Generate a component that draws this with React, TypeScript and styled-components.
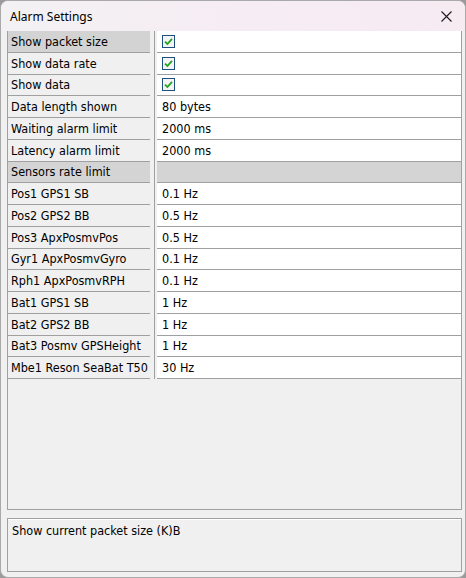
import styled, { createGlobalStyle } from 'styled-components'

const GlobalStyle = createGlobalStyle`
  html, body {
    margin: 0;
    padding: 0;
    background: #9a9a9a;
  }
  * {
    box-sizing: border-box;
  }
`

const lineColor = '#a0a0a0'
const gridFont = `"DejaVu Sans Condensed", "Liberation Sans", sans-serif`

const Window = styled.div`
  width: 466px;
  height: 578px;
  display: flex;
  flex-direction: column;
  background: #f0f0f0;
  border: 1px solid #a9a9a9;
  border-radius: 8px;
  overflow: hidden;
`

const TitleBar = styled.div`
  height: 30px;
  flex: none;
  display: flex;
  align-items: center;
  justify-content: space-between;
  padding: 0 9px 0 9px;
  background: linear-gradient(90deg, #f3f1f3 0%, #f6ecf3 60%, #f7ebf2 100%);
`

const Title = styled.span`
  font-family: "Segoe UI", "Noto Sans", sans-serif;
  font-size: 12px;
  color: #000;
`

const CloseButton = styled.button`
  width: 16px;
  height: 16px;
  padding: 0;
  border: none;
  background: transparent;
  display: flex;
  align-items: center;
  justify-content: center;
  margin-right: 2px;
`

const Body = styled.div`
  flex: 1;
  display: flex;
  flex-direction: column;
  padding: 0 3px 5px 6px;
`

const GridBox = styled.div`
  flex: 1;
  display: flex;
  flex-direction: column;
  border-left: 1px solid ${lineColor};
  border-right: 1px solid ${lineColor};
  border-bottom: 1px solid ${lineColor};
`

const Row = styled.div`
  display: grid;
  grid-template-columns: 142px 7px 1fr;
  height: 21.75px;
  font-family: ${gridFont};
  font-size: 12.5px;
  color: #000;
`

const LabelCell = styled.div<{ $shade: 'none' | 'selected' | 'category' }>`
  display: flex;
  align-items: center;
  padding-left: 3px;
  white-space: nowrap;
  overflow: hidden;
  border-bottom: 1px solid ${lineColor};
  background: ${(p) =>
    p.$shade === 'selected' ? '#d3d3d3' : p.$shade === 'category' ? '#d4d4d4' : '#f0f0f0'};
`

const Divider = styled.div`
  background: linear-gradient(
    90deg,
    transparent 4px,
    ${lineColor} 4px,
    ${lineColor} 5px,
    transparent 5px
  );
`

const ValueCell = styled.div<{ $category?: boolean }>`
  display: flex;
  align-items: center;
  padding-left: 5px;
  white-space: nowrap;
  border-bottom: 1px solid ${lineColor};
  background: ${(p) => (p.$category ? '#d4d4d4' : '#ffffff')};
`

const CheckBox = styled.span`
  width: 13px;
  height: 13px;
  border: 1px solid #1f4f7e;
  background: #f4f4f4;
  display: flex;
  align-items: center;
  justify-content: center;
`

const Splitter = styled.div`
  height: 8px;
  flex: none;
`

const DescriptionBox = styled.div`
  height: 54px;
  flex: none;
  border: 1px solid ${lineColor};
  box-shadow: inset 0 1px 0 #ffffff;
  padding: 4px 0 0 4px;
  font-family: ${gridFont};
  font-size: 12.5px;
  color: #000;
`

type Item = {
  label: string
  value?: string
  check?: boolean
  category?: boolean
  selected?: boolean
}

const items: Item[] = [
  { label: 'Show packet size', check: true, selected: true },
  { label: 'Show data rate', check: true },
  { label: 'Show data', check: true },
  { label: 'Data length shown', value: '80 bytes' },
  { label: 'Waiting alarm limit', value: '2000 ms' },
  { label: 'Latency alarm limit', value: '2000 ms' },
  { label: 'Sensors rate limit', category: true },
  { label: 'Pos1 GPS1 SB', value: '0.1 Hz' },
  { label: 'Pos2 GPS2 BB', value: '0.5 Hz' },
  { label: 'Pos3 ApxPosmvPos', value: '0.5 Hz' },
  { label: 'Gyr1 ApxPosmvGyro', value: '0.1 Hz' },
  { label: 'Rph1 ApxPosmvRPH', value: '0.1 Hz' },
  { label: 'Bat1 GPS1 SB', value: '1 Hz' },
  { label: 'Bat2 GPS2 BB', value: '1 Hz' },
  { label: 'Bat3 Posmv GPSHeight', value: '1 Hz' },
  { label: 'Mbe1 Reson SeaBat T50', value: '30 Hz' },
]

const CheckMark = () => (
  <svg width="9" height="9" viewBox="0 0 9 9">
    <path d="M1 4.6 L3.4 7 L8 1.8" fill="none" stroke="#22a322" strokeWidth="1.8" />
  </svg>
)

const CloseIcon = () => (
  <svg width="11" height="11" viewBox="0 0 11 11">
    <path d="M0.5 0.5 L10.5 10.5 M10.5 0.5 L0.5 10.5" stroke="#1a1a1a" strokeWidth="1.1" />
  </svg>
)

export default function App() {
  return (
    <>
      <GlobalStyle />
      <Window>
        <TitleBar>
          <Title>Alarm Settings</Title>
          <CloseButton aria-label="Close">
            <CloseIcon />
          </CloseButton>
        </TitleBar>
        <Body>
          <GridBox>
            {items.map((item) => (
              <Row key={item.label}>
                <LabelCell
                  $shade={item.category ? 'category' : item.selected ? 'selected' : 'none'}
                >
                  {item.label}
                </LabelCell>
                <Divider />
                <ValueCell $category={item.category}>
                  {item.check ? (
                    <CheckBox>
                      <CheckMark />
                    </CheckBox>
                  ) : (
                    item.value
                  )}
                </ValueCell>
              </Row>
            ))}
          </GridBox>
          <Splitter />
          <DescriptionBox>Show current packet size (K)B</DescriptionBox>
        </Body>
      </Window>
    </>
  )
}
